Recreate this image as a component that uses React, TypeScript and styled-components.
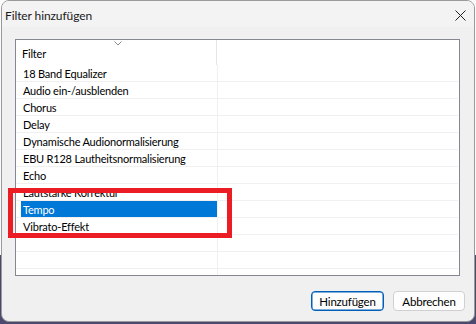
import React from 'react';
import styled, { createGlobalStyle } from 'styled-components';

const GlobalStyle = createGlobalStyle`
  html, body {
    margin: 0;
    padding: 0;
    background: #fbfbfb;
  }
  body {
    font-family: Lato, "Noto Sans", "Liberation Sans", sans-serif;
    font-size: 11px;
    letter-spacing: -0.2px;
    color: #000;
  }
`;

const Page = styled.div`
  position: relative;
  width: 476px;
  height: 324px;
  overflow: hidden;
  background: linear-gradient(to bottom, #fbfbfb 255px, #4b4a6e 255px);
`;

const Window = styled.div`
  margin-left: 1px;
  width: 474px;
  height: 322px;
  box-sizing: border-box;
  border: 1px solid #9a9a9a;
  border-radius: 8px;
  background: #f0f0f0;
  display: flex;
  flex-direction: column;
  overflow: hidden;
`;

const TitleBar = styled.div`
  height: 26px;
  flex: none;
  display: flex;
  align-items: center;
  justify-content: space-between;
  padding: 0 8px 0 3px;
  background: #f3f3f3;
`;

const Title = styled.span`
  font-size: 12px;
  letter-spacing: -0.1px;
  color: #1a1a1a;
  padding-top: 2px;
`;

const CloseButton = styled.div`
  width: 12px;
  height: 12px;
  display: flex;
  align-items: center;
  justify-content: center;
  margin-top: 2px;
`;

const Body = styled.div`
  flex: 1;
  padding: 12px 14px 0 13px;
  display: flex;
  flex-direction: column;
`;

const ListBox = styled.div`
  height: 237px;
  box-sizing: border-box;
  border: 1px solid #858890;
  background: #fff;
  overflow: hidden;
`;

const Header = styled.div`
  position: relative;
  height: 25px;
  display: grid;
  grid-template-columns: 200px 1px 1fr;
`;

const HeaderCell = styled.div`
  display: flex;
  align-items: center;
  padding: 2px 0 0 6px;
`;

const HeaderDivider = styled.div`
  background: #e5e5e5;
`;

const SortArrow = styled.svg`
  position: absolute;
  left: 98px;
  top: 1px;
`;

const Row = styled.div`
  height: 16px;
  display: grid;
  grid-template-columns: 201px 1px 1fr;
  border-bottom: 1px solid #f0f0f0;
  margin-right: 1px;
`;

const Cell = styled.div`
  padding-left: 5px;
  display: flex;
  min-width: 0;
`;

const Label = styled.div<{ $selected?: boolean }>`
  flex: 1;
  display: flex;
  align-items: center;
  padding-left: 2px;
  white-space: nowrap;
  background: ${(p) => (p.$selected ? '#0078d7' : 'transparent')};
  color: ${(p) => (p.$selected ? '#fff' : '#000')};
`;

const ColumnLine = styled.div`
  background: #f0f0f0;
`;

const Footer = styled.div`
  display: flex;
  justify-content: flex-end;
  gap: 9px;
  padding: 15px 9px 10px 0;
`;

const Button = styled.div<{ $primary?: boolean }>`
  height: 20px;
  box-sizing: border-box;
  width: ${(p) => (p.$primary ? '73px' : '72px')};
  display: flex;
  align-items: center;
  justify-content: center;
  border-radius: 4px;
  background: #fdfdfd;
  border: 1px solid ${(p) => (p.$primary ? '#005fb8' : '#d0d0d0')};
  box-shadow: ${(p) => (p.$primary ? 'inset 0 0 0 0.5px #005fb8' : 'none')};
  font-size: 11.5px;
`;

const Highlight = styled.div`
  position: absolute;
  left: 8px;
  top: 188px;
  width: 224px;
  height: 50px;
  box-sizing: border-box;
  border: 5px solid #ec1c24;
  pointer-events: none;
`;

const filters = [
  '18 Band Equalizer',
  'Audio ein-/ausblenden',
  'Chorus',
  'Delay',
  'Dynamische Audionormalisierung',
  'EBU R128 Lautheitsnormalisierung',
  'Echo',
  'Lautstärke Korrektur',
  'Tempo',
  'Vibrato-Effekt',
  '',
  '',
  '',
];

const selected = 'Tempo';

export default function App() {
  return (
    <Page>
      <GlobalStyle />
      <Window>
        <TitleBar>
          <Title>Filter hinzufügen</Title>
          <CloseButton>
            <svg width="11" height="11" viewBox="0 0 11 11">
              <path d="M0.5 0.5 L10.5 10.5 M10.5 0.5 L0.5 10.5" stroke="#222" strokeWidth="1" />
            </svg>
          </CloseButton>
        </TitleBar>
        <Body>
          <ListBox>
            <Header>
              <HeaderCell>Filter</HeaderCell>
              <HeaderDivider />
              <div />
              <SortArrow width="8" height="5" viewBox="0 0 8 5">
                <path d="M0.5 0.5 L4 4 L7.5 0.5" fill="none" stroke="#8c8c8c" strokeWidth="1" />
              </SortArrow>
            </Header>
            {filters.map((name, i) => (
              <Row key={i}>
                <Cell>
                  <Label $selected={name === selected}>{name}</Label>
                </Cell>
                <ColumnLine />
                <div />
              </Row>
            ))}
          </ListBox>
        </Body>
        <Footer>
          <Button $primary>Hinzufügen</Button>
          <Button>Abbrechen</Button>
        </Footer>
      </Window>
      <Highlight />
    </Page>
  );
}
